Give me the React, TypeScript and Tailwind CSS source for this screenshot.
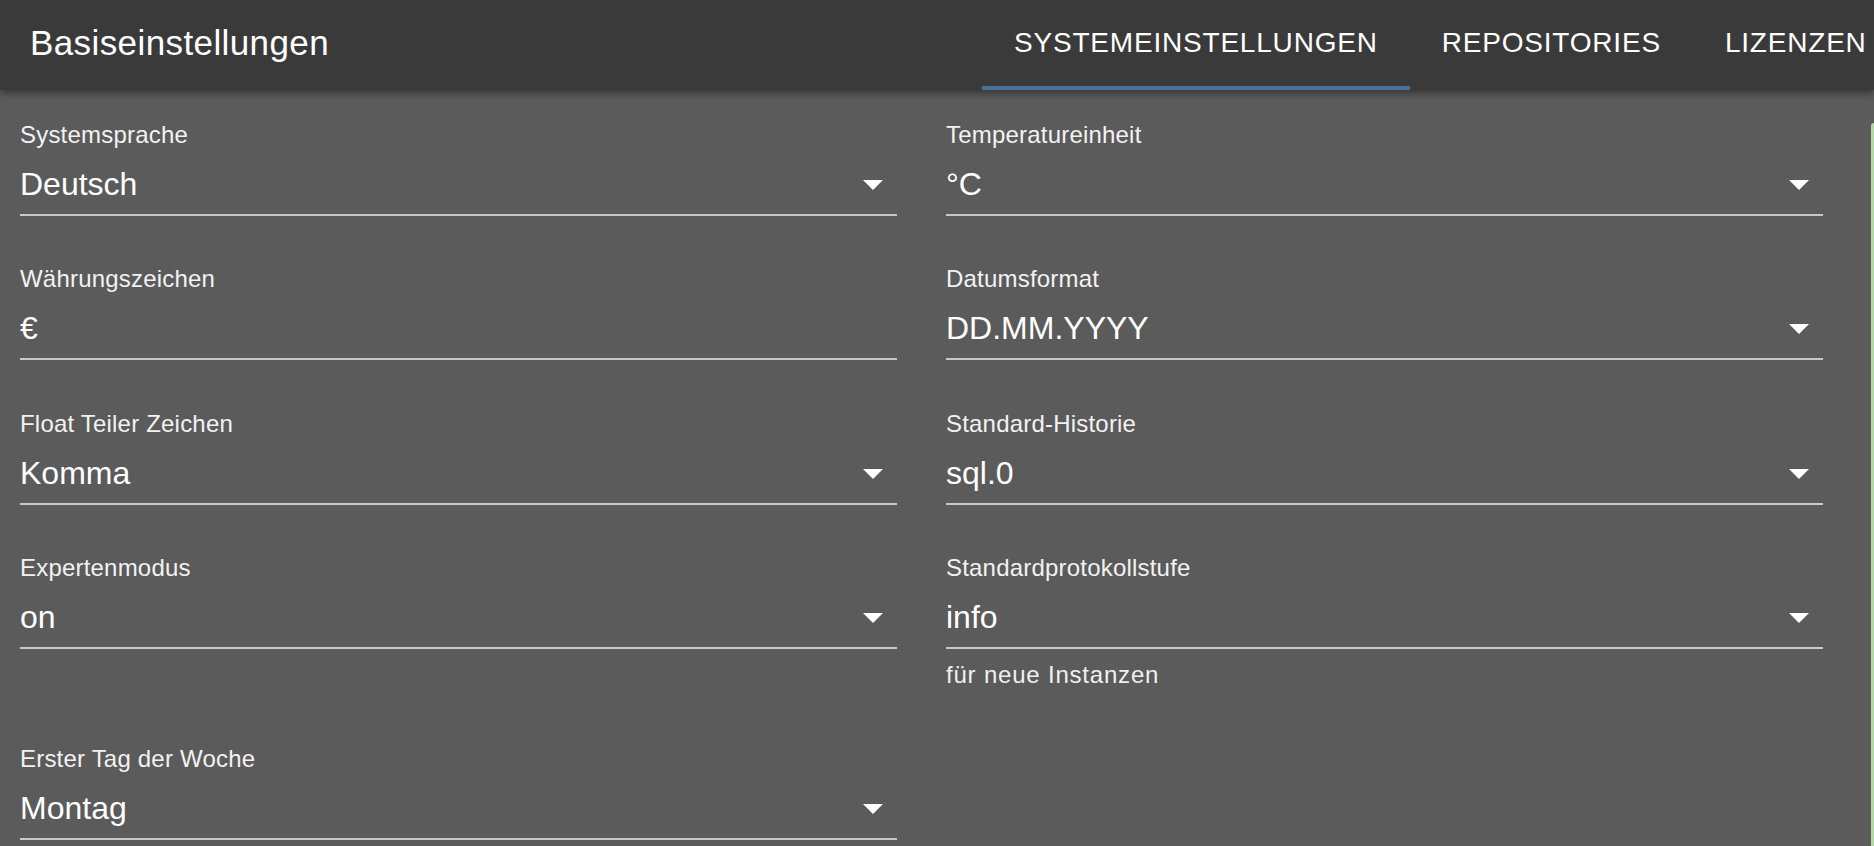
import React from "react";

type Field = {
  label: string;
  value: string;
  select?: boolean;
  helper?: string;
};

const fields: (Field | null)[] = [
  { label: "Systemsprache", value: "Deutsch", select: true },
  { label: "Temperatureinheit", value: "°C", select: true },
  { label: "Währungszeichen", value: "€" },
  { label: "Datumsformat", value: "DD.MM.YYYY", select: true },
  { label: "Float Teiler Zeichen", value: "Komma", select: true },
  { label: "Standard-Historie", value: "sql.0", select: true },
  { label: "Expertenmodus", value: "on", select: true },
  { label: "Standardprotokollstufe", value: "info", select: true, helper: "für neue Instanzen" },
  { label: "Erster Tag der Woche", value: "Montag", select: true },
  null,
];

const tabs = ["SYSTEMEINSTELLUNGEN", "REPOSITORIES", "LIZENZEN"];

const ArrowDropDown = () => (
  <svg
    viewBox="0 0 24 24"
    className="absolute right-0 top-[-5px] w-[48px] h-[48px] pointer-events-none"
    fill="#ffffff"
  >
    <path d="M7 10l5 5 5-5z" />
  </svg>
);

const SettingField = ({ field }: { field: Field }) => (
  <div className="flex flex-col">
    <label className="block text-[24px] leading-[24px] tracking-[0.2px] text-[#f2f2f2] whitespace-nowrap">
      {field.label}
    </label>
    <div className="relative mt-[18px] pb-[11px] border-b-2 border-[#c8c8c8]">
      <div className="text-[32px] leading-[38px] text-white whitespace-nowrap">{field.value}</div>
      {field.select && <ArrowDropDown />}
    </div>
    {field.helper && (
      <p className="mt-[6px] text-[24px] leading-[40px] tracking-[0.8px] text-[#f0f0f0]">
        {field.helper}
      </p>
    )}
  </div>
);

const App = () => {
  return (
    <div
      className="relative w-[1874px] h-[846px] overflow-hidden bg-[#5b5b5b]"
      style={{ fontFamily: '"Liberation Sans", Arial, sans-serif' }}
    >
      <header className="relative z-10 flex h-[90px] bg-[#3a3a3a] shadow-[0_3px_8px_rgba(0,0,0,0.45)]">
        <div className="flex items-center w-[982px] shrink-0 pl-[30px] pb-[6px]">
          <h1 className="text-[35px] leading-[35px] tracking-[0.4px] text-white whitespace-nowrap">
            Basiseinstellungen
          </h1>
        </div>
        <nav className="flex min-w-0 flex-1 overflow-hidden">
          {tabs.map((tab, i) => (
            <div
              key={tab}
              className="relative flex-none h-[90px] px-[32px] pt-[29px] text-[28px] leading-[28px] tracking-[0.8px] text-white whitespace-nowrap"
            >
              {tab}
              {i === 0 && <span className="absolute left-0 right-0 bottom-0 h-[4px] bg-[#4a6f9d]" />}
            </div>
          ))}
        </nav>
      </header>

      <main className="px-[20px] pt-[33px]">
        <div className="grid grid-cols-[877px_877px] gap-x-[49px] gap-y-[51.4px] items-start">
          {fields.map((f, i) => (f ? <SettingField key={f.label} field={f} /> : <div key={i} />))}
        </div>
      </main>

      <div className="absolute right-0 top-[123px] bottom-0 w-[3px] rounded-tl-[3px] bg-[#b5d9a6]" />
    </div>
  );
};

export default App;
